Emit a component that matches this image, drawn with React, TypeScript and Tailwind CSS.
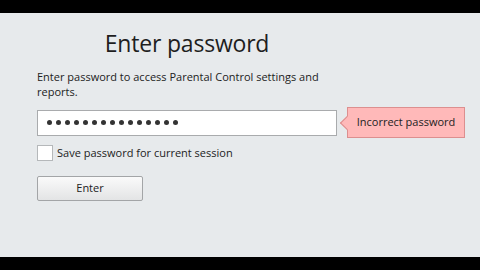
export default function App() {
  const dots = Array.from({ length: 15 });

  return (
    <div
      className="w-[480px] h-[270px] flex flex-col bg-black overflow-hidden"
      style={{ fontFamily: '"Open Sans", "Noto Sans", sans-serif' }}
    >
      <div className="h-[13px] bg-black" />
      <div className="flex-1 bg-[#e7eaec] pl-[37px] flex flex-col">
        <div className="w-[300px] text-center text-[23px] leading-none text-[#1e1e1e] mt-[19px] tracking-[-0.2px]">
          Enter password
        </div>

        <p className="mt-[14px] w-[300px] text-[11px] leading-[15px] text-[#222]">
          Enter password to access Parental Control settings and reports.
        </p>

        <div className="mt-[8px] flex items-center">
          <div className="w-[300px] h-[26px] bg-white border border-[#a9abad] flex items-center pl-[9px] gap-[4px]">
            {dots.map((_, i) => (
              <span key={i} className="w-[5px] h-[5px] rounded-full bg-[#333]" />
            ))}
          </div>
          <div className="relative ml-[10px] w-[118px] h-[31px] bg-[#ffb9b9] border border-[#dc8f8f] flex items-center justify-center text-[11px] text-[#222]">
            <span className="absolute left-[-6px] top-[10px] w-[10px] h-[10px] bg-[#ffb9b9] border-l border-b border-[#dc8f8f] rotate-45" />
            <span className="relative">Incorrect password</span>
          </div>
        </div>

        <label className="mt-[7px] flex items-center gap-[4px] text-[11px] text-[#222]">
          <span className="w-[16px] h-[16px] bg-white border border-[#b5b8ba]" />
          Save password for current session
        </label>

        <button className="mt-[14px] w-[106px] h-[25px] border border-[#a3a5a7] rounded-[2px] bg-gradient-to-b from-[#fafafa] to-[#e3e4e5] text-[11px] text-[#222]">
          Enter
        </button>
      </div>
      <div className="h-[13px] bg-black" />
    </div>
  );
}
